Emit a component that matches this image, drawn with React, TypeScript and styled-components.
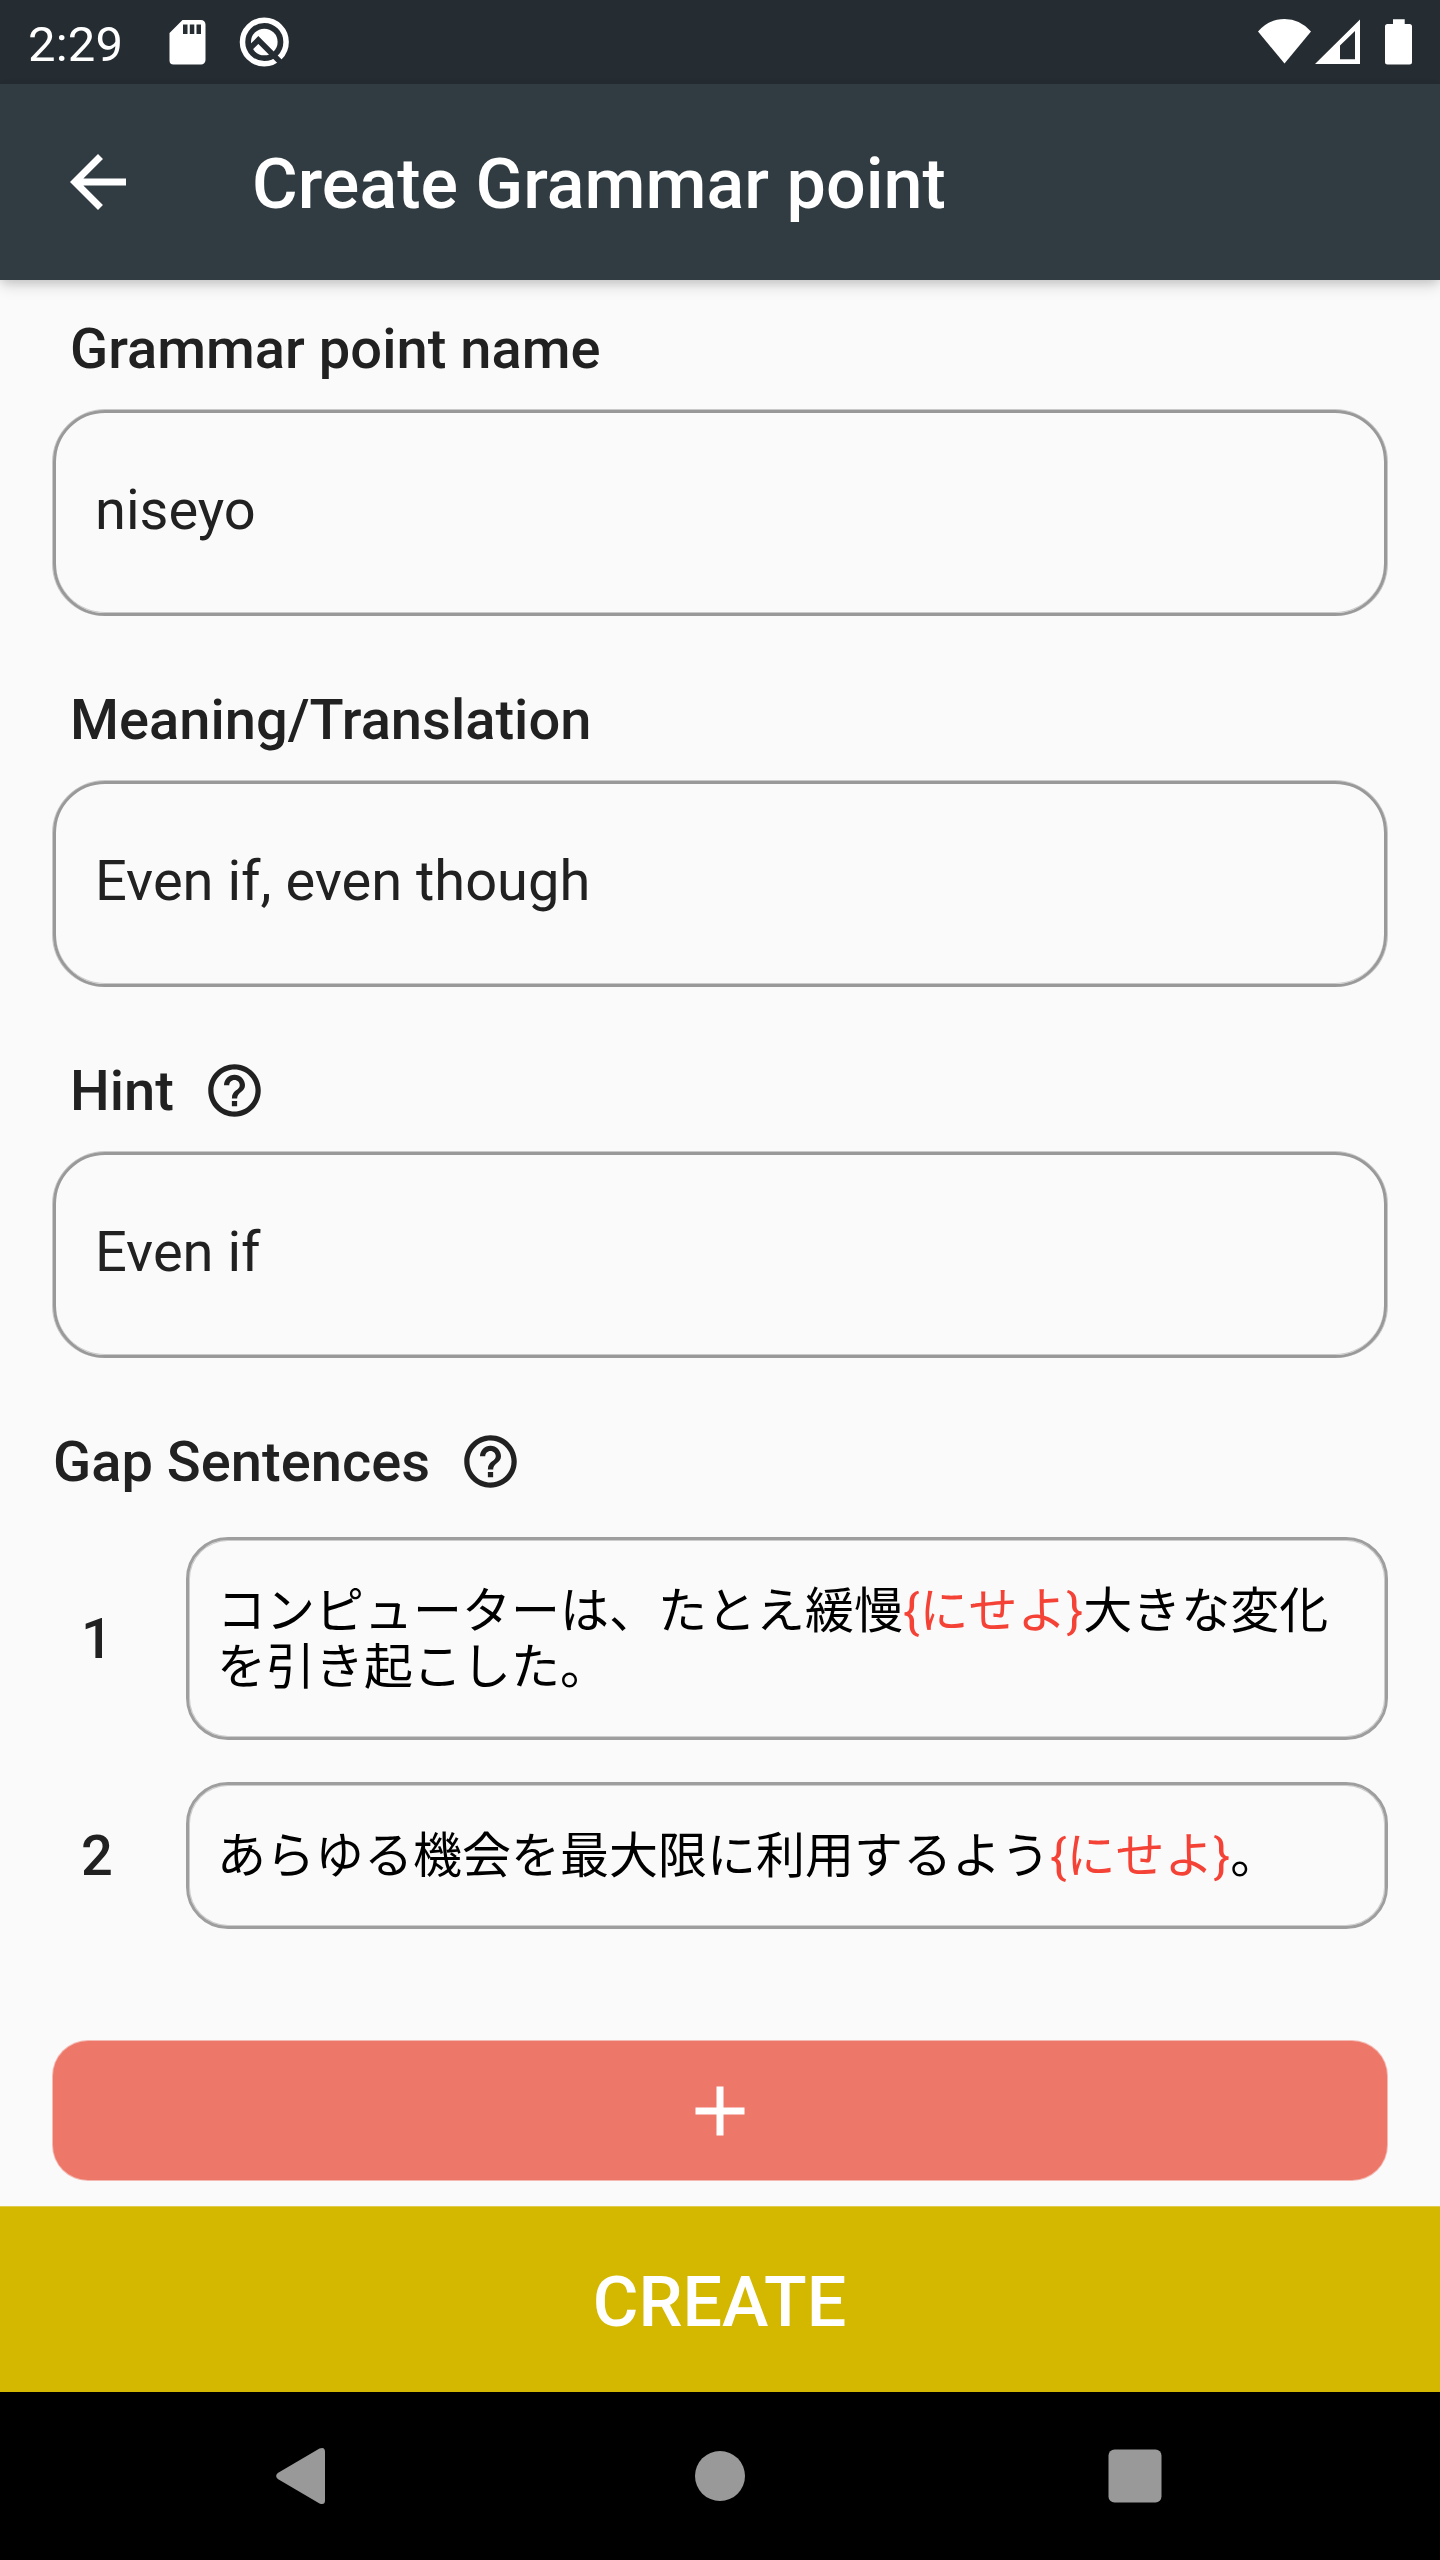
import React from "react";
import styled, { createGlobalStyle } from "styled-components";

const Global = createGlobalStyle`
  * { box-sizing: border-box; }
  body { margin: 0; background: #fafafa; }
`;

const Screen = styled.div`
  width: 1440px;
  height: 2560px;
  display: flex;
  flex-direction: column;
  background: #fafafa;
  color: #212121;
  font-family: Roboto, "Noto Sans CJK JP", sans-serif;
  overflow: hidden;
`;

const StatusBar = styled.header`
  height: 84px;
  flex: none;
  display: flex;
  align-items: center;
  justify-content: space-between;
  background: #252d33;
  color: #fff;
`;

const StatusGroup = styled.div`
  display: flex;
  height: 84px;
`;

const Clock = styled.time`
  width: 160px;
  padding-left: 28px;
  font-size: 49px;
  line-height: 89px;
  letter-spacing: 0.2px;
`;

const StatusIcon = styled.svg<{ $w: number }>`
  display: block;
  flex: none;
  width: ${(p) => p.$w}px;
  height: 84px;
`;

const AppBar = styled.div`
  height: 196px;
  flex: none;
  display: flex;
  align-items: center;
  padding-left: 56px;
  background: #313c42;
  color: #fff;
  box-shadow: 0 7px 14px -2px rgba(0, 0, 0, 0.17), 0 3px 8px rgba(0, 0, 0, 0.08);
`;

const BackButton = styled.button`
  width: 84px;
  height: 84px;
  margin-right: 112px;
  padding: 0;
  border: 0;
  background: none;
  color: inherit;
`;

const Icon = styled.svg<{ $size: number }>`
  display: block;
  width: ${(p) => p.$size}px;
  height: ${(p) => p.$size}px;
  fill: currentColor;
`;

const Title = styled.h1`
  margin: 0;
  font-size: 70px;
  font-weight: 500;
  line-height: 84px;
  padding-top: 4px;
  letter-spacing: 0.04px;
`;

const Form = styled.main`
  flex: 1;
  display: flex;
  flex-direction: column;
  padding: 0 53px;
`;

const Field = styled.section`
  height: 371px;
  flex: none;
  display: flex;
  flex-direction: column;
`;

const LabelRow = styled.div<{ $inset: number }>`
  height: 130px;
  flex: none;
  display: flex;
  align-items: center;
  gap: 28.600px;
  padding: 6px 0 0 ${(p) => p.$inset}px;
`;

const LabelText = styled.label`
  padding-top: 2px;
  font-size: 56px;
  font-weight: 500;
  line-height: 66px;
  letter-spacing: 0.03px;
`;

const InputBox = styled.div`
  height: 206px;
  display: flex;
  align-items: center;
  padding: 0 0 6px 39px;
  border: 3px solid #999;
  border-radius: 52px;
  box-shadow: 0 -1px 0 #c9c9c9, 1px 0 0 #c9c9c9, -1px 0 0 #c9c9c9, inset 0 -1px 0 #c9c9c9;
  font-size: 56px;
`;

const SentenceList = styled.ol`
  display: flex;
  flex-direction: column;
  gap: 42px;
  margin: 14px -1px 0 0;
  padding: 0;
  list-style: none;
`;

const SentenceRow = styled.li`
  display: flex;
  align-items: center;
`;

const Index = styled.span`
  width: 88px;
  margin-right: 45px;
  text-align: center;
  font-size: 56px;
  font-weight: 500;
`;

const SentenceBox = styled.div`
  flex: 1;
  padding: 44px 28px 41px;
  border: 3px solid #9e9e9e;
  border-radius: 42px;
  box-shadow: inset 0 0 0 1px #cdcdcd;
  color: #000;
  font-size: 49px;
  line-height: 56px;
`;

const Gap = styled.span`
  color: #f44336;
`;

const AddButton = styled.button`
  height: 139px;
  margin: 112px 0 26px;
  padding: 0;
  display: flex;
  align-items: center;
  justify-content: center;
  border: 0;
  border-radius: 35px;
  background: #ed7769;
  box-shadow: 0 0 0 1px rgba(237, 119, 105, 0.5);
  color: #fff;
`;

const CreateButton = styled.button`
  height: 186px;
  flex: none;
  padding: 4px 1px 0 0;
  border: 0;
  border-top: 1px solid #e0cb4d;
  background: #d4b800;
  color: #fff;
  font: 500 70px/84px Roboto, sans-serif;
`;

const NavBar = styled.nav`
  height: 168px;
  flex: none;
  display: flex;
  align-items: center;
  justify-content: space-between;
  padding: 0 263px;
  background: #000;
  color: #999;
`;

const HelpIcon = () => (
  <Icon $size={63} viewBox="0 0 24 24">
    <path d="M11 18h2v-2h-2v2zm1-16C6.48 2 2 6.48 2 12s4.480 10 10 10 10-4.480 10-10S17.520 2 12 2zm0 18c-4.410 0-8-3.590-8-8s3.590-8 8-8 8 3.590 8 8-3.590 8-8 8zm0-14c-2.210 0-4 1.790-4 4h2c0-1.100.9-2 2-2s2 .9 2 2c0 2-3 1.750-3 5h2c0-2.250 3-2.500 3-5 0-2.210-1.790-4-4-4z" />
  </Icon>
);

const fields = [
  { label: "Grammar point name", value: "niseyo", help: false },
  { label: "Meaning/Translation", value: "Even if, even though", help: false },
  { label: "Hint", value: "Even if", help: true },
];

const sentences = [
  { before: "コンピューターは、たとえ緩慢", gap: "{にせよ}", after: "大きな変化を引き起こした。" },
  { before: "あらゆる機会を最大限に利用するよう", gap: "{にせよ}", after: "。" },
];

export default function App() {
  return (
    <Screen>
      <Global />
      <StatusBar>
        <StatusGroup>
          <Clock>2:29</Clock>
          <StatusIcon $w={60} viewBox="160 0 60 84">
            <path
              fill="#fff"
              fillRule="evenodd"
              d="M182.500 20h18.500a4.500 4.500 0 0 1 4.500 4.500v35.500a4.500 4.500 0 0 1-4.500 4.500h-27.500a4 4 0 0 1-4-4V33zM183 24.500v9.500h4.500v-9.500zM189.800 24.500v9.500h4.500v-9.500zM196.500 24.500v9.500h4.500v-9.500z"
            />
          </StatusIcon>
          <StatusIcon $w={80} viewBox="220 0 80 84">
            <circle cx="264.300" cy="42" r="21.800" fill="none" stroke="#fff" strokeWidth="5.500" />
            <circle cx="264.300" cy="42" r="13.300" fill="#fff" />
            <path d="M249 49.300L258.300 40L284 65.700" fill="none" stroke="#252d33" strokeWidth="5.500" />
          </StatusIcon>
        </StatusGroup>
        <StatusGroup>
          <StatusIcon $w={190} viewBox="1250 0 190 84">
            <g fill="#fff">
              <path d="M1258 31.500Q1269 19 1284.500 19T1311 31.500L1284.500 63.500z" />
              <path fillRule="evenodd" d="M1315 64L1360 19.500V64zM1340 45.500V59.300H1355V31z" />
              <path d="M1393 19.300h11.700v4.700h4.800a2.500 2.500 0 0 1 2.500 2.500v35.500a2.500 2.500 0 0 1-2.500 2.500h-22a2.500 2.500 0 0 1-2.500-2.500v-35.500a2.500 2.500 0 0 1 2.500-2.500h5.500z" />
            </g>
          </StatusIcon>
        </StatusGroup>
      </StatusBar>
      <AppBar>
        <BackButton aria-label="Back">
          <Icon $size={84} viewBox="0 0 24 24">
            <path d="M20 11H7.830l5.590-5.590L12 4l-8 8 8 8 1.410-1.410L7.830 13H20v-2z" />
          </Icon>
        </BackButton>
        <Title>Create Grammar point</Title>
      </AppBar>
      <Form>
        {fields.map((f) => (
          <Field key={f.label}>
            <LabelRow $inset={17}>
              <LabelText>{f.label}</LabelText>
              {f.help && <HelpIcon />}
            </LabelRow>
            <InputBox>{f.value}</InputBox>
          </Field>
        ))}
        <LabelRow $inset={0}>
          <LabelText>Gap Sentences</LabelText>
          <HelpIcon />
        </LabelRow>
        <SentenceList>
          {sentences.map((s, i) => (
            <SentenceRow key={s.before}>
              <Index>{i + 1}</Index>
              <SentenceBox>
                {s.before}
                <Gap>{s.gap}</Gap>
                {s.after}
              </SentenceBox>
            </SentenceRow>
          ))}
        </SentenceList>
        <AddButton aria-label="Add sentence">
          <Icon $size={84} viewBox="0 0 24 24">
            <path d="M19 13h-6v6h-2v-6H5v-2h6V5h2v6h6v2z" />
          </Icon>
        </AddButton>
      </Form>
      <CreateButton>CREATE</CreateButton>
      <NavBar>
        <Icon $size={84} viewBox="263 2434 84 84">
          <path d="M277.800 2473L319.500 2448.500Q325 2446.500 325 2451.800V2500.200Q325 2505.500 319.500 2503.500L277.800 2479Q274.500 2476 277.800 2473z" />
        </Icon>
        <Icon $size={84} viewBox="0 0 84 84">
          <circle cx="42" cy="42" r="25" />
        </Icon>
        <Icon $size={84} viewBox="0 0 84 84">
          <rect x="15.500" y="15.500" width="53" height="53" rx="6" />
        </Icon>
      </NavBar>
    </Screen>
  );
}
